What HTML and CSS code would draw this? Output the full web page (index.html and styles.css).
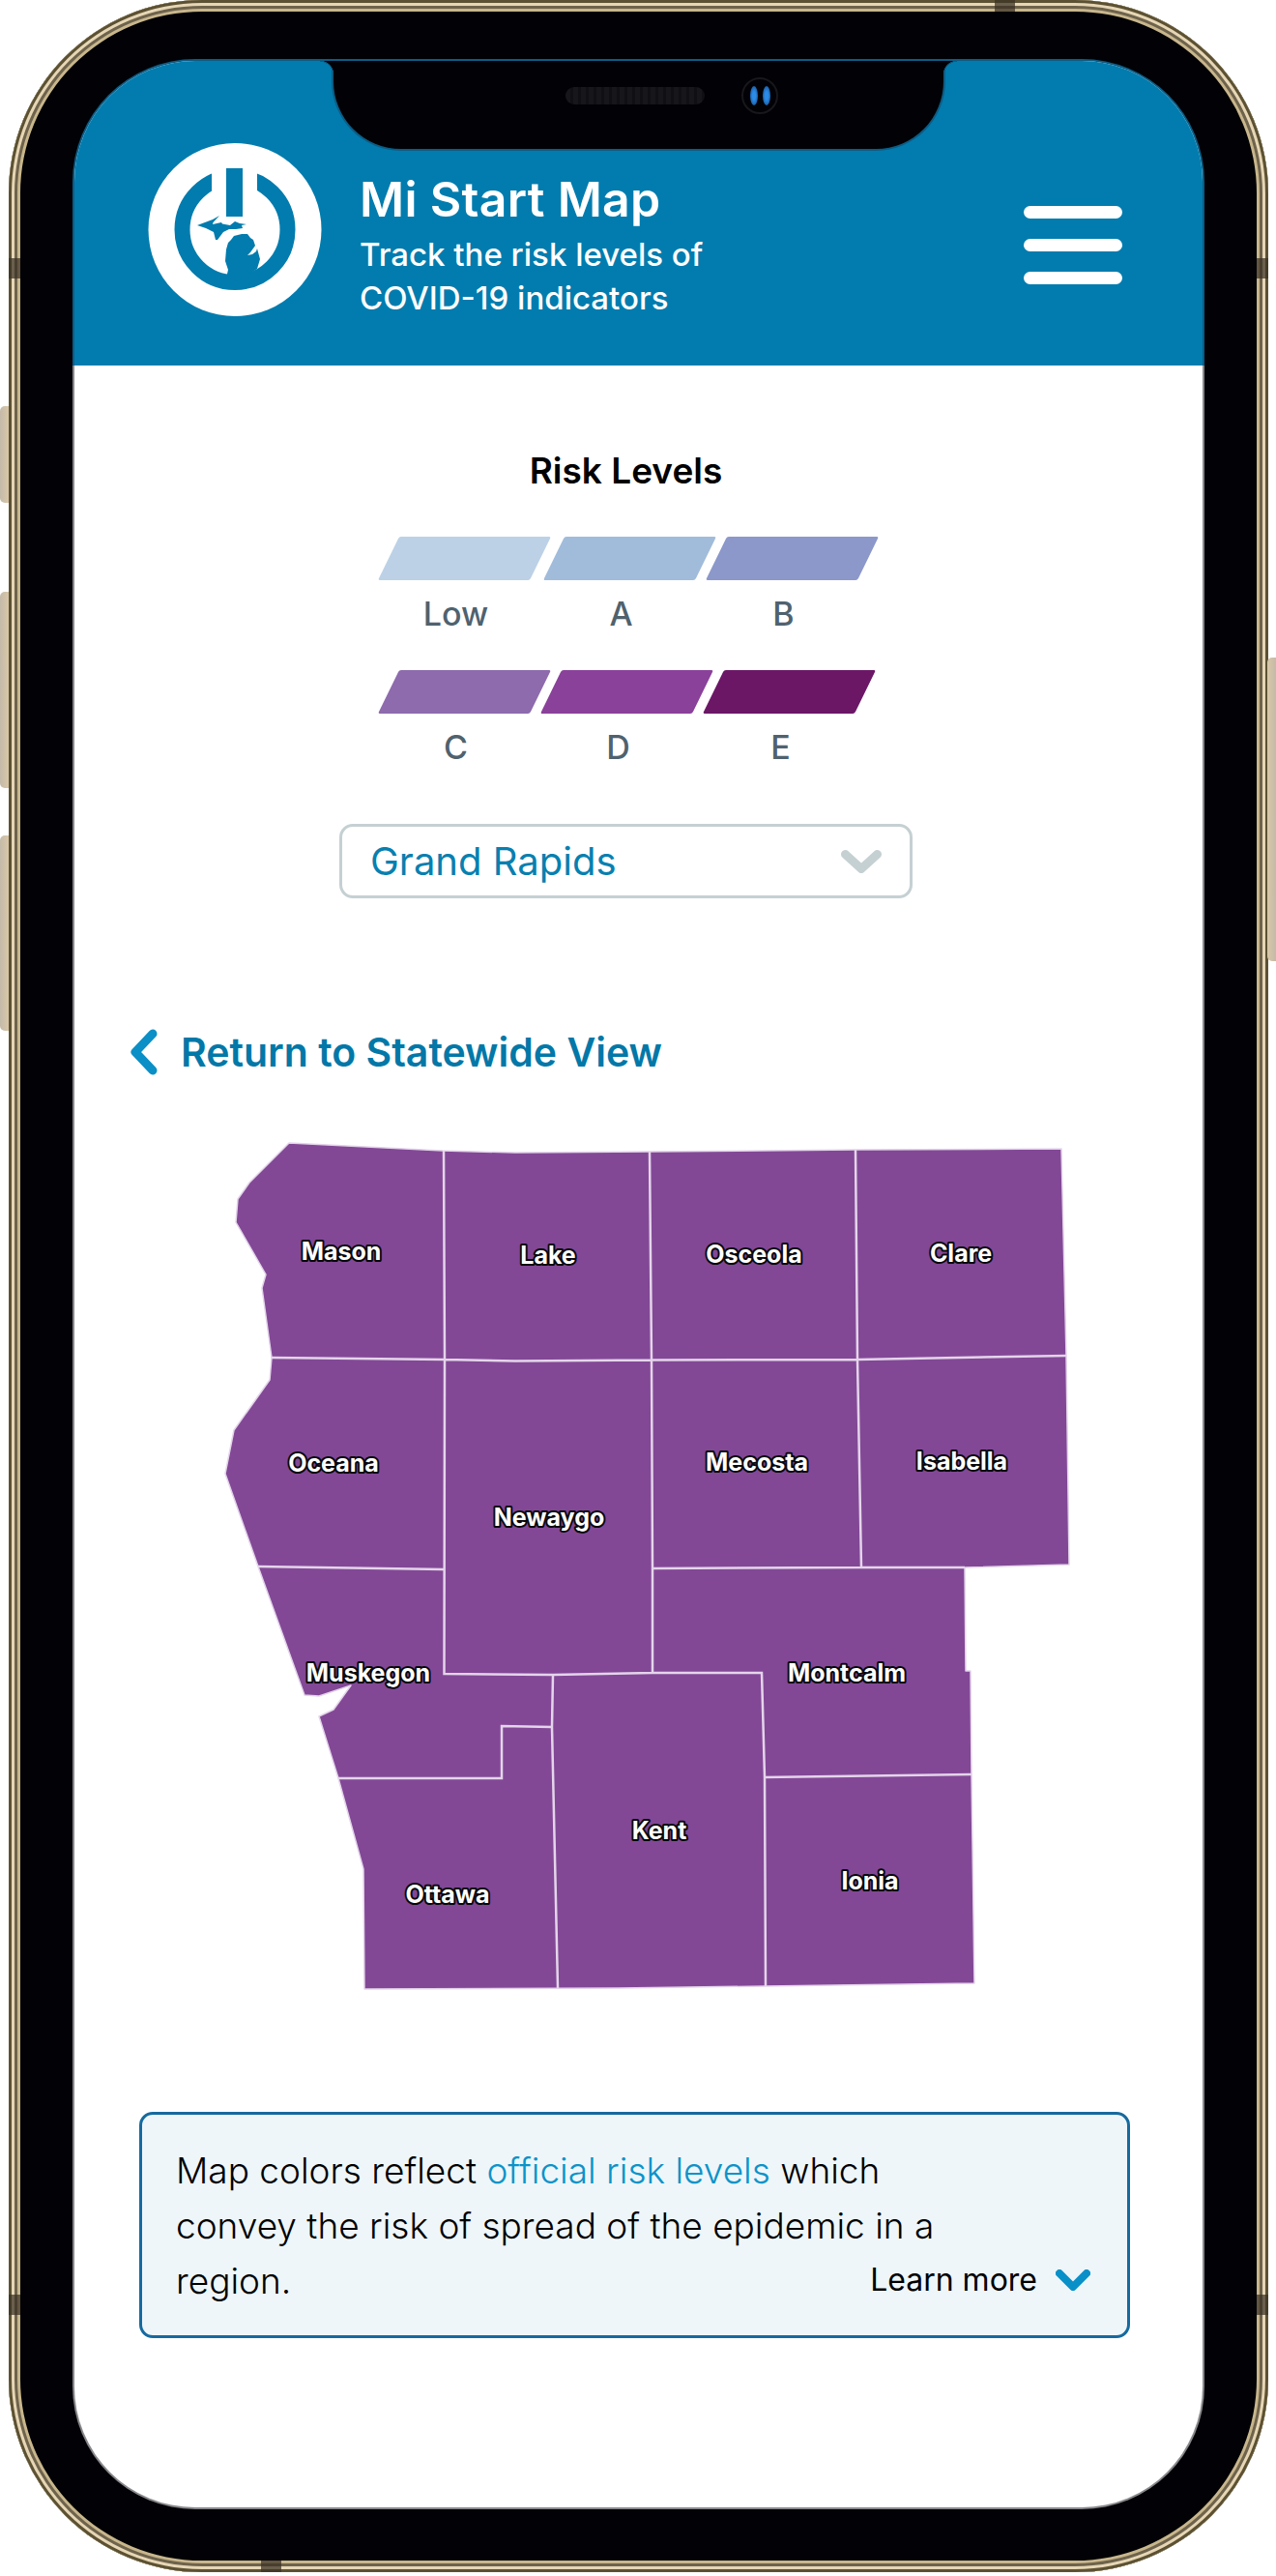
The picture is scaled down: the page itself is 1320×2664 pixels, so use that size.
FILE: index.html
```html
<!DOCTYPE html>
<html lang="en">
<head>
<meta charset="utf-8">
<title>Mi Start Map</title>
<link rel="stylesheet" href="styles.css">
</head>
<body>
<div class="device">
  <span class="side-btn btn-a"></span>
  <span class="side-btn btn-b"></span>
  <span class="side-btn btn-c"></span>
  <span class="side-btn btn-d"></span>
  <span class="band band-l1"></span>
  <span class="band band-l2"></span>
  <span class="band band-r1"></span>
  <span class="band band-r2"></span>
  <span class="band band-top"></span>
  <span class="band band-bottom"></span>
  <div class="frame">
    <div class="screen-edge">
      <div class="screen">
        <div class="notch">
          <span class="speaker"></span>
          <span class="camera"><i></i><i></i></span>
        </div>
        <header class="header">
          <svg class="logo" viewBox="0 0 180 180" aria-hidden="true">
            <circle cx="90" cy="89.5" r="89.5" fill="#fff"/>
            <circle cx="90" cy="89.5" r="54.5" fill="none" stroke="#027cae" stroke-width="16"/>
            <rect x="66" y="10" width="47" height="62" fill="#fff"/>
            <rect x="81" y="26" width="17" height="50" fill="#027cae"/>
            <path fill="#027cae" d="M51 85 L59 82 L67 79 L74 75 L67.500 82 L67 84 L76 82 L77 83.500 L85 85 L90 81 L95 83 L102 84 L97 85 L98 88 L91 89 L84 89 L78 92 L72 100 L70 100 L68 92 L60 88 Z"/>
            <path fill="#027cae" d="M89 96 L97 94 L103 94 L106 98 L109 100 L111 106 L106 113 L103 116 L108 115 L112 112 L113 109 L116 120 L113 130 L107 134 L104 141 L80 144 L83 131 L80 122 L81 110 L83 103 L86 100 Z"/>
          </svg>
          <div class="brand">
            <h1 class="brand-title">Mi Start Map</h1>
            <p class="brand-sub">Track the risk levels of<br>COVID-19 indicators</p>
          </div>
          <button class="burger" type="button" aria-label="Menu"><span></span><span></span><span></span></button>
        </header>
        <main class="main">
          <section class="controls">
            <h2 class="legend-title">Risk Levels</h2>
            <div class="legend">
              <div class="legend-row">
                <div class="legend-item item-wide"><span class="swatch s-low"></span><span class="legend-label">Low</span></div>
                <div class="legend-item"><span class="swatch s-a"></span><span class="legend-label">A</span></div>
                <div class="legend-item"><span class="swatch s-b"></span><span class="legend-label">B</span></div>
              </div>
              <div class="legend-row">
                <div class="legend-item"><span class="swatch s-c"></span><span class="legend-label">C</span></div>
                <div class="legend-item"><span class="swatch s-d"></span><span class="legend-label">D</span></div>
                <div class="legend-item"><span class="swatch s-e"></span><span class="legend-label">E</span></div>
              </div>
            </div>
            <div class="select">
              <span class="select-value">Grand Rapids</span>
              <svg class="select-chevron" viewBox="0 0 42 24" aria-hidden="true"><path d="M4.500 4.500 L21 19.500 L37.500 4.500"/></svg>
            </div>
          </section>
          <a class="back-link" href="#">
            <svg class="back-chevron" viewBox="0 0 29 48" aria-hidden="true"><path d="M24 5 L6 24 L24 43"/></svg>
            <span>Return to Statewide View</span>
          </a>
          <svg class="map" viewBox="200 1150 940 930" role="img" aria-label="Map of the Grand Rapids region">
            <path class="map-land" d="M299 1182 L458 1190 L533 1192 L672 1191 L885 1189 L1098 1188 L1103 1402 L1106 1618 L998 1621 L999 1728 L1004 1728 L1005 1835 L1008 2051 L792 2054 L640 2056 L377 2057 L376 1933 L350 1839 L330 1775 L345 1768 L363 1743 L330 1754 L315 1753 L267 1620 L233 1524 L242 1479 L279 1427 L281 1404 L271 1332 L275 1318 L244 1264 L246 1240 L258 1223 Z"/>
            <path class="map-line" d="M459 1190 L460 1406 M281 1404 L460 1406 L533 1407.500 L674 1406.500 L887 1406 L1103 1402 M672 1191 L674 1406.500 L675 1622 L675 1730 M885 1189 L887 1406 L891 1621 M675 1622 L891 1621 L998 1621 M460 1406 L459.500 1731 L572 1732 L675 1730 L788 1730 L791 1838 L792 2054 M267 1620 L458.500 1623 M572 1732 L571 1786 L577 2056 M791 1838 L1005 1835 M350 1839 L519 1839 L519 1785 L571 1786"/>
            <g class="map-labels">
              <text x="353" y="1303">Mason</text>
              <text x="567" y="1307">Lake</text>
              <text x="780" y="1306">Osceola</text>
              <text x="994" y="1305">Clare</text>
              <text x="345" y="1522">Oceana</text>
              <text x="783" y="1521">Mecosta</text>
              <text x="995" y="1520">Isabella</text>
              <text x="568" y="1578">Newaygo</text>
              <text x="381" y="1739">Muskegon</text>
              <text x="876" y="1739">Montcalm</text>
              <text x="682" y="1902">Kent</text>
              <text x="900" y="1954">Ionia</text>
              <text x="463" y="1968">Ottawa</text>
            </g>
          </svg>
          <aside class="note">
            <p class="note-text">Map colors reflect <a class="note-link" href="#">official risk levels</a> which<br>convey the risk of spread of the epidemic in a</p>
            <div class="note-last">
              <span class="note-text">region.</span>
              <button class="learn" type="button">
                <span>Learn more</span>
                <svg class="learn-chevron" viewBox="0 0 36 22" aria-hidden="true"><path d="M4 4 L18 18 L32 4"/></svg>
              </button>
            </div>
          </aside>
        </main>
      </div>
    </div>
  </div>
</div>
</body>
</html>
```
FILE: styles.css
```css
* { box-sizing: border-box; }
html, body { margin: 0; background: #fff; }
body { font-family: Inter, "Open Sans", sans-serif; }

.device { position: relative; width: 1320px; height: 2664px; }

.frame {
  margin-left: 9px;
  width: 1303px;
  height: 2660px;
  padding: 61px 66px 65px;
  border-radius: 200px;
  background: #020206;
  box-shadow:
    inset 0 0 0 3px #5c5233,
    inset 0 0 0 6px #e6d6b5,
    inset 0 0 0 9px #6e634c,
    inset 0 0 0 12px #c8b68c;
}

.side-btn {
  position: absolute;
  width: 9px;
  background: linear-gradient(90deg, #c4baa9, #d9c8a8);
}
.btn-a { left: 0; top: 420px; height: 100px; border-radius: 5px 0 0 5px; }
.btn-b { left: 0; top: 612px; height: 203px; border-radius: 5px 0 0 5px; }
.btn-c { left: 0; top: 864px; height: 202px; border-radius: 5px 0 0 5px; }
.btn-d { right: 0; top: 680px; height: 314px; border-radius: 0 5px 5px 0; transform: scaleX(-1); }

.band { position: absolute; z-index: 2; background: rgba(58, 48, 36, .72); }
.band-l1 { left: 9px; top: 267px; width: 12px; height: 21px; }
.band-l2 { left: 9px; top: 2373px; width: 12px; height: 21px; }
.band-r1 { left: 1300px; top: 267px; width: 12px; height: 21px; }
.band-r2 { left: 1300px; top: 2373px; width: 12px; height: 21px; }
.band-top { left: 1029px; top: 0; width: 21px; height: 12px; }
.band-bottom { left: 270px; top: 2648px; width: 21px; height: 12px; }

.screen-edge {
  height: 2534px;
  padding: 2px;
  border-radius: 127px;
  background: linear-gradient(#0d5c85 0 317px, #88888c 317px);
}

.screen {
  position: relative;
  height: 2530px;
  border-radius: 125px;
  overflow: hidden;
  background: #fff;
}

.notch {
  position: absolute;
  left: 268px;
  top: 0;
  width: 631px;
  height: 91px;
  padding: 17px 0 0 240px;
  display: flex;
  align-items: center;
  align-self: flex-start;
  gap: 38px;
  background: #020206;
  border-radius: 0 0 70px 70px;
  box-shadow: 0 0 0 2px #0d5c85;
}
.notch { align-items: flex-start; }
.notch::before,
.notch::after {
  content: "";
  position: absolute;
  top: 0;
  width: 14px;
  height: 14px;
}
.notch::before { left: -14px; background: radial-gradient(circle at 0 100%, transparent 13px, #0d5c85 13px, #0d5c85 14px, #020206 14.500px); }
.notch::after { right: -14px; background: radial-gradient(circle at 100% 100%, transparent 13px, #0d5c85 13px, #0d5c85 14px, #020206 14.500px); }

.speaker {
  width: 144px;
  height: 18px;
  margin-top: 10px;
  border-radius: 9px;
  background: repeating-linear-gradient(90deg, #17171b 0 5px, #101014 5px 8px);
}
.camera {
  width: 38px;
  height: 38px;
  border: 2px solid #17171c;
  border-radius: 50%;
  display: flex;
  align-items: center;
  justify-content: center;
  gap: 5px;
}
.camera i {
  width: 8px;
  height: 20px;
  border-radius: 50%;
  background: radial-gradient(ellipse at center, #2b8be6 30%, #123f7c 100%);
}

.header {
  height: 315px;
  padding: 85px 83px 0 76px;
  display: flex;
  align-items: flex-start;
  background: #027cae;
  color: #fff;
}
.logo { width: 180px; height: 180px; flex: none; }
.brand { margin: 30px 0 0 39px; flex: 1; }
.brand-title {
  margin: 0;
  font-size: 50px;
  line-height: 56px;
  font-weight: 600;
  letter-spacing: .3px;
}
.brand-sub {
  margin: 7px 0 0;
  font-size: 33px;
  line-height: 45px;
  font-weight: 500;
}
.burger {
  margin: 65px 0 0;
  padding: 0;
  width: 102px;
  border: 0;
  background: none;
  display: flex;
  flex-direction: column;
  gap: 21px;
}
.burger span { height: 13px; border-radius: 6.500px; background: #fff; }

.main { padding-top: 86px; }
.controls { width: 1141px; display: flex; flex-direction: column; align-items: center; }
.legend-title {
  margin: 0;
  font-size: 37px;
  line-height: 46px;
  font-weight: 600;
  color: #000;
}
.legend { align-self: flex-start; margin: 45px 0 0 324.500px; display: flex; flex-direction: column; gap: 41px; }
.legend-row { display: flex; gap: 11px; }
.legend-item { width: 157px; display: flex; flex-direction: column; align-items: center; }
.item-wide { margin-right: 3px; }
.swatch { display: block; width: 157px; height: 45px; border-radius: 2px; transform: skewX(-26deg); }
.s-low { background: #bcd1e6; }
.s-a { background: #a0bcda; }
.s-b { background: #8c98c9; }
.s-c { background: #8d6bac; }
.s-d { background: #8a419a; }
.s-e { background: #6b1766; }
.legend-label {
  margin-top: 18px;
  padding-right: 17px;
  font-size: 34px;
  line-height: 34px;
  font-weight: 500;
  color: #4f626e;
}

.select {
  margin-top: 62px;
  width: 593px;
  height: 77px;
  padding: 0 29px;
  display: flex;
  align-items: center;
  justify-content: space-between;
  border: 3px solid #c5d0d3;
  border-radius: 14px;
}
.select-value { font-size: 40px; font-weight: 400; color: #0780b0; }
.select-chevron { width: 42px; height: 24px; fill: none; stroke: #c5d0d3; stroke-width: 9; stroke-linecap: round; stroke-linejoin: round; }

.back-link {
  margin: 134px 0 0 57px;
  height: 50px;
  display: flex;
  align-items: center;
  gap: 24px;
  font-size: 41px;
  font-weight: 600;
  color: #0278a8;
  text-decoration: none;
}
.back-chevron { width: 29px; height: 48px; fill: none; stroke: #0a8fc6; stroke-width: 9; stroke-linecap: round; stroke-linejoin: round; }

.map { display: block; width: 940px; height: 930px; margin: 37px 0 0 123px; }
.map-land { fill: #824896; stroke: #e4d5ea; stroke-width: 1.500; stroke-linejoin: round; }
.map-line { fill: none; stroke: #e4d5ea; stroke-width: 2.500; stroke-linejoin: miter; }
.map-labels text {
  font-family: Inter, sans-serif;
  font-size: 25px;
  font-weight: 700;
  text-anchor: middle;
  fill: #fff;
  stroke: #08080c;
  stroke-width: 4px;
  stroke-linejoin: round;
  paint-order: stroke;
}

.note {
  margin: 104px 0 0 67px;
  width: 1025px;
  height: 234px;
  padding: 29px 35px 0;
  border: 3px solid #166a9f;
  border-radius: 14px;
  background: #eef6fa;
}
.note-text { margin: 0; font-size: 37px; line-height: 57px; font-weight: 300; color: #000; }
.note-link { color: #0c93c9; text-decoration: none; }
.note-last { display: flex; justify-content: space-between; align-items: flex-start; }
.learn {
  margin: 6px 3px 0 0;
  padding: 0;
  border: 0;
  background: none;
  display: flex;
  align-items: center;
  gap: 19px;
  font-family: inherit;
  font-size: 32px;
  line-height: 44px;
  font-weight: 400;
  color: #000;
}
.learn-chevron { width: 36px; height: 22px; fill: none; stroke: #0a90c8; stroke-width: 8; stroke-linecap: round; stroke-linejoin: round; }
```
